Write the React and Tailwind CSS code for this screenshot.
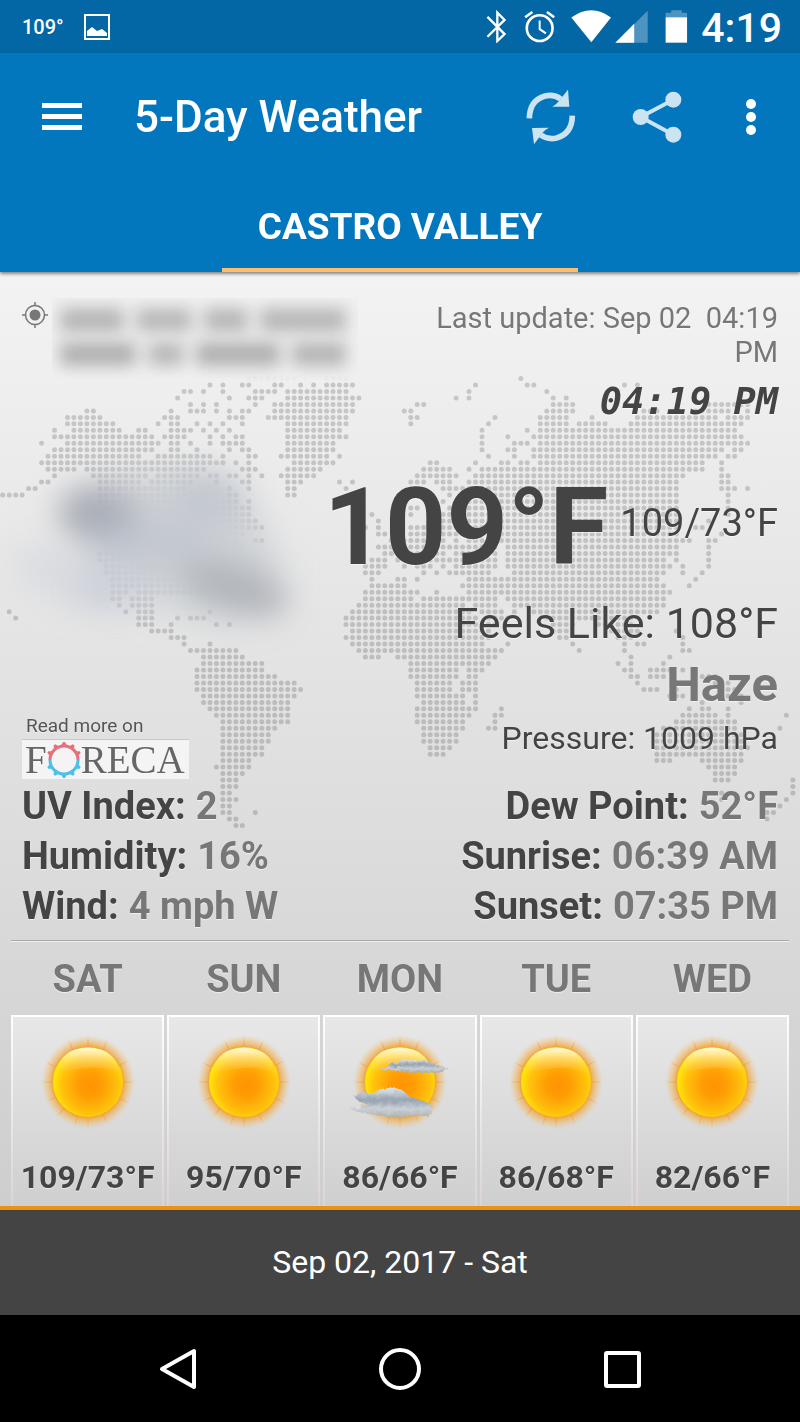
import React from "react";

/* Dotted world map: one entry per row, column ranges of the dots. */
const MAP_ROWS = [
  "38-45 50-53 80",
  "32 34 37-38 42-43 46 48 50-54 73 81-82 96 98",
  "28-29 31 34 39-42 44-53 72 84",
  "27 35 38-40 44-55 70 72 85 87",
  "29 31 33 39 42-54 64-65 85-88 109-115",
  "13-14 26 29-31 33 35 37-38 42-54 62-63 84-88 99-101 107-112 115",
  "10-15 25-27 35-37 41-53 63-64 76 83-87 91 98-110 112-115",
  "10-17 24 26-27 30 32 34 37 44-53 63 75 83-87 89-93 97-114",
  "8 11-18 21-22 26-29 31 33 35 44-52 74 81 83-113",
  "8-23 25-28 32 34 36-37 44-53 74 78 82-114",
  "6 10-24 26-27 29 32 34-37 44-51 74 79-81 83-115",
  "8-23 26-27 30 35 37-38 44-51 74 78-79 82-111 113-114",
  "7-21 24-32 34 38-39 43-50 52 75 79 82-110 112-113",
  "6-34 36 38 45-51 66-67 73 77-78 80-81 83-108 111",
  "7-11 13-31 37-39 44-49 65-69 72 74-108 111",
  "8 14-22 24-30 32-33 35-36 38 40 43-48 64-70 73-105 111-112",
  "6-7 15-21 23-29 33 37-38 44-46 52 54 63-65 67-69 72-104 111-112",
  "4-5 15-28 35 38 44-45 53 68-104 111-113 115",
  "0-3 15-28 35-36 44-45 69 71-104 112",
  "15-29 33-36 38 68 71-104 112",
  "16-30 33-38 63-64 69-104 112",
  "16-38 57 63 66-104 112",
  "16-39 58 68-104 109",
  "16-40 56 58 63-65 67-104 107-108",
  "16-37 58-59 63-66 68-104 111",
  "16-36 39-40 60 62-68 70 72-106 109-110",
  "16-37 58-60 62-66 68-76 78-104 109",
  "15-33 59-60 62-68 70-76 78-104 109",
  "15-32 57-59 61-63 65-76 78-102 104 109",
  "16-31 56-59 62 64-66 68 70-76 78-103 105 109",
  "16-31 56-58 65 67 69-75 79-102 105 108",
  "17-32 57 61-62 64 72-101 107",
  "17-31 57-62 71-102 106",
  "17-19 21-31 56-64 67 72-103",
  "17-18 20-23 56-63 65-76 78-102",
  "18 20-23 55-71 73-76 79-102",
  "1 19 21-23 32 54-72 74-77 79 82-101",
  "2 21-23 27 29-31 53-73 75-78 84-98",
  "21-23 26 33 35 53-73 75-76 85-88 92-97",
  "23-26 54-75 85-87 94-98 104",
  "26-28 53-75 86-87 95-97 105",
  "28 32 54-74 78 88 96 98-99 105",
  "29-36 55-77 89 96 105-106",
  "31-37 56-58 61-76 97 103",
  "31-40 63-75 95 97 102",
  "30-40 63-70 72-74 96-97 100-103 105",
  "30-42 63-70 72-73 97-98 100-102 108-110",
  "30-45 64-69 71-73 98 104 110-112",
  "30-46 64-69 71-73 99-101 104 111-113",
  "31-45 64-71 73 103-105 112-114",
  "31-44 65-71 73 108 114",
  "32-44 64-73 77 106 108-109 112",
  "33-44 64-72 76-77 105-110 112 121",
  "34-44 64-71 76 104-113",
  "34-42 65-71 75-76 102-113 120",
  "34-41 65-70 101-114",
  "34-41 65-70 101-114",
  "34-40 66-69 101-115",
  "34-40 66-68 101-114",
  "34-38 101-103 108-114",
  "33-38 109-113",
  "34-37 110-113",
  "34-36 110-112 122",
  "34-36 122",
  "34-35 111 122",
  "34-36 111 121",
  "34-35 120",
  "34-35 39 118-119",
  "35-36 118",
  "36-37",
];

const PITCH = 6.477;

const MAP_PATH = MAP_ROWS.map((row, r) =>
  row
    .split(" ")
    .map((range) => {
      const [a, b = a] = range.split("-").map(Number);
      let d = "";
      for (let c = a; c <= b; c++) {
        d += `M${(2.7 + c * PITCH).toFixed(1)} ${(106.5 + r * PITCH).toFixed(1)}h0`;
      }
      return d;
    })
    .join("")
).join("");

function WorldMap() {
  return (
    <svg viewBox="0 0 800 600" className="absolute inset-x-0 top-0 w-full" aria-hidden="true">
      <defs>
        <filter id="soft" x="-60%" y="-60%" width="220%" height="220%">
          <feGaussianBlur stdDeviation="18" />
        </filter>
        <filter id="softer" x="-60%" y="-60%" width="220%" height="220%">
          <feGaussianBlur stdDeviation="15" />
        </filter>
      </defs>
      <path d={MAP_PATH} stroke="#000" strokeOpacity="0.165" strokeWidth="5" strokeLinecap="round" />
      <g filter="url(#soft)">
        <path d="M75 225Q130 190 220 205Q262 235 280 300Q275 350 205 345Q90 325 75 225Z" fill="#ced1d6" />
        <ellipse cx="80" cy="305" rx="70" ry="24" fill="#cdd1da" fillOpacity="0.6" transform="rotate(15 80 305)" />
      </g>
      <g filter="url(#softer)">
        <ellipse cx="98" cy="243" rx="40" ry="26" fill="#a3a7b0" fillOpacity="0.9" transform="rotate(10 98 243)" />
        <ellipse cx="208" cy="226" rx="34" ry="24" fill="#bfc4cd" fillOpacity="0.8" />
        <ellipse cx="150" cy="270" rx="62" ry="22" fill="#bfc4ce" fillOpacity="0.8" />
        <ellipse cx="235" cy="316" rx="56" ry="22" fill="#b0b3b8" fillOpacity="0.95" transform="rotate(18 235 316)" />
        <ellipse cx="105" cy="318" rx="34" ry="15" fill="#c6cad6" fillOpacity="0.7" />
      </g>
    </svg>
  );
}

const RAYS = [0, 25, 62, 90, 117, 155, 180, 197, 222, 245, 270, 295, 335];

function SunIcon({ clouds = false }) {
  return (
    <svg viewBox="0 0 104 96" className="h-24 w-[104px]" role="img" aria-label={clouds ? "Partly cloudy" : "Sunny"}>
      <defs>
        <radialGradient id="glow">
          <stop offset="0.72" stopColor="#f0950f" stopOpacity="0.95" />
          <stop offset="0.79" stopColor="#f3a02c" stopOpacity="0.65" />
          <stop offset="0.9" stopColor="#f5b04c" stopOpacity="0.32" />
          <stop offset="1" stopColor="#f5c070" stopOpacity="0" />
        </radialGradient>
        <radialGradient id="disc" cx="0.53" cy="0.55" r="0.58">
          <stop offset="0" stopColor="#ff9300" />
          <stop offset="0.3" stopColor="#ff9d05" />
          <stop offset="0.7" stopColor="#ffc20c" />
          <stop offset="0.9" stopColor="#ffe608" />
          <stop offset="1" stopColor="#fff000" />
        </radialGradient>
        <linearGradient id="gloss" x2="0" y2="1">
          <stop offset="0" stopColor="#fffbe8" stopOpacity="0.95" />
          <stop offset="0.45" stopColor="#ffe9b0" stopOpacity="0.5" />
          <stop offset="1" stopColor="#ffd070" stopOpacity="0" />
        </linearGradient>
        <linearGradient id="cloud" x2="0" y2="1">
          <stop offset="0" stopColor="#dfe6ec" />
          <stop offset="0.4" stopColor="#98a4b1" />
          <stop offset="0.7" stopColor="#c9d0d8" />
          <stop offset="1" stopColor="#acaea2" />
        </linearGradient>
        <filter id="fuzz" x="-10%" y="-20%" width="120%" height="140%">
          <feTurbulence type="fractalNoise" baseFrequency="0.18" numOctaves="2" result="n" />
          <feDisplacementMap in="SourceGraphic" in2="n" scale="6" />
          <feGaussianBlur stdDeviation="0.7" />
        </filter>
      </defs>
      <circle cx="52" cy="48" r="47" fill="url(#glow)" />
      {RAYS.map((a) => (
        <path key={a} d="M51 13L52 2L53 13Z" fill="#f3a437" fillOpacity="0.6" transform={`rotate(${a} 52 48)`} />
      ))}
      <circle cx="52" cy="48" r="35" fill="url(#disc)" />
      <path d="M21 40Q23 14 52 14Q81 14 83 40Q68 32 52 34Q36 35 21 40Z" fill="url(#gloss)" />
      {clouds && (
        <g filter="url(#fuzz)" fill="url(#cloud)">
          <path d="M32 36Q42 33 47 28Q58 24 70 26Q82 27 88 31Q98 33 102 36Q92 40 80 38Q60 40 48 36Q40 37 32 36Z" />
          <path d="M5 61Q14 58 24 60Q32 53 44 54Q56 54 62 64Q76 65 84 72Q86 80 78 82Q64 80 54 84Q38 84 26 80Q12 80 2 75Q14 74 20 70Q8 68 5 61Z" />
        </g>
      )}
    </svg>
  );
}

function StatusBar() {
  return (
    <div className="flex h-[53px] items-center justify-between bg-[#0366a5] pl-[22px] pr-[18px] text-white">
      <div className="flex items-center gap-5">
        <span className="text-[20px] font-medium leading-none">109°</span>
        <svg viewBox="0 0 26 26" className="size-[26px]" fill="none" aria-hidden="true">
          <rect x="1" y="1" width="24" height="24" stroke="#fff" strokeWidth="2" />
          <path d="M3 22V17L8 13L13 17L18 15L23 19V22Z" fill="#fff" />
        </svg>
      </div>
      <div className="flex items-center">
        <svg viewBox="80 30 66 100" className="h-[33px] w-[22px]" fill="none" stroke="#fff" strokeWidth="7" aria-hidden="true">
          <path d="M84 51L136 103L114 124V38L136 60L84 111" />
        </svg>
        <svg viewBox="196 30 96 100" className="ml-4 h-[33px] w-8" fill="none" stroke="#fff" aria-hidden="true">
          <circle cx="243" cy="85" r="39" strokeWidth="8" />
          <path d="M243 62V88L262 101" strokeWidth="6" />
          <path d="M199 52L221 36M287 52L265 36" strokeWidth="8" />
        </svg>
        <svg viewBox="334 30 120 98" className="ml-[15px] h-[33px] w-10" aria-hidden="true">
          <path d="M335 52Q395 8 454 52L395 126Z" fill="#fff" />
        </svg>
        <svg viewBox="464 30 98 98" className="ml-1 size-[33px]" aria-hidden="true">
          <path d="M561 32V127H465Z" fill="#fff" fillOpacity="0.3" />
          <path d="M521 71V127H465Z" fill="#fff" />
        </svg>
        <svg viewBox="614 30 68 100" className="ml-[17px] h-[33px] w-[23px]" aria-hidden="true">
          <path d="M615 38H632V31H664V38H680V52H615Z" fill="#fff" fillOpacity="0.3" />
          <path d="M615 52H680V129H615Z" fill="#fff" />
        </svg>
        <span className="ml-[13px] pt-1 text-[41px] font-medium leading-none">4:19</span>
      </div>
    </div>
  );
}

function AppBar() {
  return (
    <header className="relative z-10 bg-[#0277bd] text-white shadow-[0_2px_3px_rgba(0,0,0,0.45)]">
      <div className="flex h-[127px] items-center pl-[42px] pr-[37px]">
        <button type="button" aria-label="Menu" className="flex w-10 flex-col gap-[6px]">
          <span className="h-[5px] w-full bg-white" />
          <span className="h-[5px] w-full bg-white" />
          <span className="h-[5px] w-full bg-white" />
        </button>
        <h1 className="ml-[52px] flex-1 whitespace-nowrap text-[44px] font-medium leading-none">5-Day Weather</h1>
        <button type="button" aria-label="Refresh" className="shrink-0">
          <svg viewBox="198 262 156 168" className="h-14 w-[52px]">
            <path d="M211 350Q212 296 258 283Q285 277 305 292" fill="none" stroke="#cce4f2" strokeWidth="17" />
            <path d="M327 264L331 315L280 315Q292 308 298 300Z" fill="#cce4f2" />
            <path d="M340 342Q339 396 293 409Q266 415 245 400" fill="none" stroke="#cce4f2" strokeWidth="17" />
            <path d="M225 428L219 379L270 378Q258 384 252 392Z" fill="#cce4f2" />
          </svg>
        </button>
        <button type="button" aria-label="Share" className="ml-[55px] shrink-0">
          <svg viewBox="518 268 150 156" className="h-[52px] w-[50px]" fill="#cce4f2">
            <path d="M642 294L544 346L642 399" fill="none" stroke="#cce4f2" strokeWidth="12" />
            <circle cx="642" cy="294" r="24" />
            <circle cx="544" cy="346" r="24" />
            <circle cx="642" cy="399" r="24" />
          </svg>
        </button>
        <button type="button" aria-label="More options" className="ml-[57px] shrink-0">
          <svg viewBox="0 0 24 38" className="h-[38px] w-6" fill="#fff">
            <circle cx="12" cy="6" r="5" />
            <circle cx="12" cy="19" r="5" />
            <circle cx="12" cy="32" r="5" />
          </svg>
        </button>
      </div>
      <nav className="flex justify-center">
        <a href="#castro-valley" className="border-b-4 border-[#fbbf6b] px-9 pb-[17px] pt-[23px] text-[37px] font-bold leading-[48px]">
          CASTRO VALLEY
        </a>
      </nav>
    </header>
  );
}

function BlurredAddress() {
  return (
    <div className="flex w-[306px] flex-col gap-[10px] overflow-hidden bg-[#efefef]/90 px-2 pb-4 pt-[10px]" aria-label="Address hidden">
      <div className="flex h-6 gap-3 blur-[8px]">
        <span className="w-16 bg-[#b5b5b5]" />
        <span className="w-14 bg-[#b9b9b9]" />
        <span className="w-11 bg-[#b7b7b7]" />
        <span className="w-[86px] bg-[#b7b7b7]" />
      </div>
      <div className="flex h-6 gap-3 blur-[8px]">
        <span className="w-[76px] bg-[#b0b0b0]" />
        <span className="w-9 bg-[#b9b9b9]" />
        <span className="w-[84px] bg-[#b0b0b0]" />
        <span className="w-[54px] bg-[#b5b5b5]" />
      </div>
    </div>
  );
}

function ForecaLink() {
  const spikes = [0, 32, 64, 116, 148, 180, 212, 244, 296, 328];
  return (
    <a href="#foreca" className="mb-[2px] block w-[167px] self-end">
      <span className="block pl-1 text-[19px] leading-[26px] text-[#555]">Read more on</span>
      <span className="flex h-10 items-center border-t border-[#c8c8c8] bg-[#f4f4f4] pl-[3px] font-['Liberation_Serif',serif] text-[39px] leading-10 text-[#666]">
        F
        <svg viewBox="0 0 34 36" className="h-9 w-[34px] shrink-0" role="img" aria-label="O">
          {spikes.map((a) => (
            <path
              key={a}
              d="M14 4L16 0H18L20 4Z"
              fill={a < 90 || a > 270 ? "#e8707a" : "#4cc0ea"}
              transform={`rotate(${a} 17 18)`}
            />
          ))}
          <path d="M3 18A14 14 0 0 1 31 18" fill="none" stroke="#e8707a" strokeWidth="3" />
          <path d="M3 18A14 14 0 0 0 31 18" fill="none" stroke="#4cc0ea" strokeWidth="3" />
        </svg>
        <span>RECA</span>
      </span>
    </a>
  );
}

const DETAILS = [
  ["UV Index:", "2", "Dew Point:", "52°F"],
  ["Humidity:", "16%", "Sunrise:", "06:39 AM"],
  ["Wind:", "4 mph W", "Sunset:", "07:35 PM"],
];

const DAYS = [
  ["SAT", "109/73°F", false],
  ["SUN", "95/70°F", false],
  ["MON", "86/66°F", true],
  ["TUE", "86/68°F", false],
  ["WED", "82/66°F", false],
];

function CurrentWeather() {
  return (
    <section className="relative px-[22px] pt-[26px]">
      <div className="flex justify-between">
        <div className="flex">
          <svg viewBox="0 0 26 26" className="mt-1 size-[26px]" fill="none" stroke="#777" strokeWidth="1.500" aria-hidden="true">
            <circle cx="13" cy="13" r="9.500" />
            <circle cx="13" cy="13" r="5.500" fill="#777" stroke="none" />
            <path d="M13 0V4M13 22V26M0 13H4M22 13H26" />
          </svg>
          <div className="ml-1">
            <BlurredAddress />
          </div>
        </div>
        <p className="w-[350px] whitespace-pre-wrap pt-[3px] text-right text-[29px] leading-[34px] text-[#777]">
          {"Last update: Sep 02  04:19 PM"}
        </p>
      </div>
      <p className="text-right font-['DejaVu_Sans_Mono',monospace] text-[37px] font-bold italic leading-[40px]">04:19 PM</p>
      <div className="mt-[50px] flex items-center justify-end gap-3 whitespace-nowrap">
        <p className="text-[107px] font-bold leading-[112px]">109°F</p>
        <p className="pb-[10px] text-[38px] leading-[44px]">109/73°F</p>
      </div>
      <div className="mt-[11px] flex justify-between">
        <ForecaLink />
        <div className="pb-[24px] text-right">
          <p className="text-[43px] leading-[56px]">Feels Like: 108°F</p>
          <p className="mt-1 text-[49px] font-bold leading-[60px] text-[#777]">Haze</p>
          <p className="mt-1 text-[32px] leading-[38px]">Pressure: 1009 hPa</p>
        </div>
      </div>
      <dl className="text-[38px] font-bold leading-[50px]">
        {DETAILS.map(([l1, v1, l2, v2]) => (
          <div key={l1} className="flex justify-between">
            <div className="flex gap-[10px]">
              <dt>{l1}</dt>
              <dd className="text-[#777]">{v1}</dd>
            </div>
            <div className="flex gap-[10px]">
              <dt>{l2}</dt>
              <dd className="text-[#777]">{v2}</dd>
            </div>
          </div>
        ))}
      </dl>
    </section>
  );
}

function Forecast() {
  return (
    <section className="relative mt-[9px] px-[11px]">
      <div className="h-[2px] border-t border-[#a9a9a9] bg-[#f0f0f0]" />
      <ul className="grid grid-cols-5 gap-[3px] pt-[13px]">
        {DAYS.map(([day, temps, clouds]) => (
          <li key={day} className="flex flex-col text-center font-bold">
            <h2 className="mb-3 text-[38px] leading-[48px] text-[#777]">{day}</h2>
            <div className="bg-linear-to-b from-white to-[#dcd4d4] px-[2px] pt-[2px]">
              <div className="flex h-[189px] flex-col items-center whitespace-nowrap bg-linear-to-b from-[#e8e8e8] to-[#cfcfcf] pt-[17px]">
                <SunIcon clouds={clouds} />
                <p className="mt-[27px] text-[32px] leading-10">{temps}</p>
              </div>
            </div>
          </li>
        ))}
      </ul>
    </section>
  );
}

function NavBar() {
  return (
    <nav className="grid h-[107px] grid-cols-3 items-center justify-items-center bg-black px-[67px]">
      <button type="button" aria-label="Back">
        <svg viewBox="0 0 40 44" className="h-11 w-10" fill="none" stroke="#fff" strokeWidth="4" strokeLinejoin="round">
          <path d="M36 4V40L4 22Z" />
        </svg>
      </button>
      <button type="button" aria-label="Home">
        <svg viewBox="0 0 44 44" className="size-11" fill="none" stroke="#fff" strokeWidth="4">
          <circle cx="22" cy="22" r="19" />
        </svg>
      </button>
      <button type="button" aria-label="Recent apps">
        <svg viewBox="0 0 40 40" className="size-10" fill="none" stroke="#fff" strokeWidth="4">
          <rect x="4" y="4" width="33" height="33" rx="1" />
        </svg>
      </button>
    </nav>
  );
}

export default function App() {
  return (
    <div className="font-[Roboto,sans-serif]">
      <StatusBar />
      <AppBar />
      <main className="relative bg-linear-to-b from-[#f3f3f3] to-[#cecece] text-[#444] [text-shadow:0_1px_1px_rgba(255,255,255,0.6)]">
        <WorldMap />
        <CurrentWeather />
        <Forecast />
      </main>
      <footer className="border-t-4 border-[#ec9117] bg-[#444] py-8 text-center text-[32px] leading-[41px] text-white">
        Sep 02, 2017 - Sat
      </footer>
      <NavBar />
    </div>
  );
}
